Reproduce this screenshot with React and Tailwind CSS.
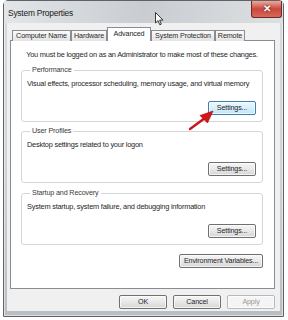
import React from 'react'

const font = { fontFamily: '"Liberation Sans", Arial, sans-serif' }

const tabs = [
  { label: 'Computer Name', w: 'w-[59px]' },
  { label: 'Hardware', w: 'w-[36px]' },
  { label: 'Advanced', w: 'w-[44px]', active: true },
  { label: 'System Protection', w: 'w-[64px]' },
  { label: 'Remote', w: 'w-[30px]' },
]

const WinButton = ({ label, className = '', hover, disabled }) => {
  let look = 'border-[#707070] bg-gradient-to-b from-[#f6f6f6] via-[#e8e8e8] to-[#d6d6d6] text-[#1e1e1e]'
  if (hover) look = 'border-[#3c7fb1] bg-gradient-to-b from-[#eef8fd] via-[#d9effc] to-[#bfe4f8] text-[#1e1e1e]'
  if (disabled) look = 'border-[#b5b9bc] bg-[#f4f4f4] text-[#9a9a9a]'
  return (
    <div className={'flex h-[14px] items-center justify-center whitespace-nowrap rounded-[2px] border text-[7.2px] leading-none tracking-[-0.15px] shadow-[inset_0_0_0_1px_rgba(255,255,255,0.7)] ' + look + ' ' + className}>
      {label}
    </div>
  )
}

const GroupBox = ({ title, text, className = '' }) => (
  <fieldset className={'rounded-[3px] border border-[#d3d7db] pb-[6px] pl-[5px] pr-[6px] ' + className}>
    <legend className="ml-[3px] px-[2px] text-[7.2px] leading-[10px] tracking-[-0.15px] text-[#3a3a3a]">{title}</legend>
    <div className="mt-[4px] whitespace-nowrap text-[7.4px] leading-[10px] tracking-[-0.22px] text-[#262626]">{text}</div>
    <div className="mt-[12px] flex justify-end">
      <WinButton label="Settings..." className="w-[48px]" hover={title === 'Performance'} />
    </div>
  </fieldset>
)

export default function App() {
  return (
    <div className="relative h-[320px] w-[288px] overflow-hidden bg-white" style={font}>
      {/* window */}
      <div className="ml-[3px] flex h-[317px] w-[281px] flex-col rounded-t-[5px] border border-[#5f6368] bg-gradient-to-b from-[#d7dbdf] via-[#cfd4d9] to-[#b9bec3] shadow-[inset_0_0_0_1px_rgba(255,255,255,0.5)]">
        {/* title bar */}
        <div className="flex h-[22px] items-start justify-between bg-gradient-to-r from-[#e3e6e9] via-[#c9ccd0] to-[#dde0e3] pl-[4px] pr-[1px]">
          <span className="mt-[8px] text-[8.4px] leading-none tracking-[-0.2px] text-[#1a1a1a]">System Properties</span>
          <div className="flex h-[17px] w-[31px] items-center justify-center rounded-b-[3px] border border-t-0 border-[#6b2a26] bg-gradient-to-b from-[#e9a99c] via-[#c9473b] to-[#d8685a] text-[10px] font-bold leading-none text-white [text-shadow:0_0_2px_#3a0b08]">
            ✕
          </div>
        </div>

        {/* client area */}
        <div className="mx-[3px] mb-[5px] flex flex-1 flex-col bg-[#f0f0f0] pt-[4px]">
          {/* tabs */}
          <div className="relative z-10 -mb-px flex h-[14px] items-end pl-[5px]">
            {tabs.map((t) =>
              t.active ? (
                <div key={t.label} className={'flex h-[14px] items-center justify-center whitespace-nowrap border border-b-0 border-[#898c95] bg-white pb-[2px] text-[7.2px] leading-none tracking-[-0.15px] text-[#1e1e1e] ' + t.w}>
                  {t.label}
                </div>
              ) : (
                <div key={t.label} className={'flex h-[11px] items-center justify-center whitespace-nowrap border border-b-0 border-[#898c95] bg-gradient-to-b from-[#fafafa] to-[#e4e4e4] text-[7.2px] leading-none tracking-[-0.15px] text-[#2a2a2a] ' + t.w}>
                  {t.label}
                </div>
              )
            )}
          </div>

          {/* panel */}
          <div className="ml-[3px] mr-[5px] flex h-[249px] flex-col border border-[#898c95] bg-white pb-[19px] pl-[10px] pr-[11px] pt-[9px]">
            <div className="whitespace-nowrap text-center text-[7.4px] leading-[10px] tracking-[-0.22px] text-[#262626]">
              You must be logged on as an Administrator to make most of these changes.
            </div>
            <GroupBox className="mt-[5px]" title="Performance" text="Visual effects, processor scheduling, memory usage, and virtual memory" />
            <GroupBox className="mt-[4px]" title="User Profiles" text="Desktop settings related to your logon" />
            <GroupBox className="mt-[5px]" title="Startup and Recovery" text="System startup, system failure, and debugging information" />
            <div className="mt-[9px] flex justify-end">
              <WinButton label="Environment Variables..." className="w-[84px]" />
            </div>
          </div>

          {/* dialog buttons */}
          <div className="mr-[5px] mt-[6px] flex justify-end gap-[6px]">
            <WinButton label="OK" className="w-[48px]" />
            <WinButton label="Cancel" className="w-[48px]" />
            <WinButton label="Apply" className="w-[48px]" disabled />
          </div>
        </div>
      </div>

      {/* mouse cursor */}
      <svg className="absolute left-[155px] top-[12px]" width="9" height="14" viewBox="0 0 9 14">
        <path d="M0.5 0.5 L0.5 11 L3 8.6 L4.8 12.8 L6.3 12.1 L4.6 8.1 L8 8.1 Z" fill="white" stroke="#222" strokeWidth="0.9" strokeLinejoin="round" />
      </svg>

      {/* red arrow */}
      <svg className="absolute left-[186px] top-[106px]" width="32" height="28" viewBox="0 0 32 28">
        <line x1="4" y1="23" x2="19" y2="12" stroke="#c8141a" strokeWidth="2.4" strokeLinecap="round" />
        <path d="M27 5 L14 9.5 L21.5 17 Z" fill="#d4161c" stroke="#9a0d10" strokeWidth="0.6" strokeLinejoin="round" />
      </svg>
    </div>
  )
}
